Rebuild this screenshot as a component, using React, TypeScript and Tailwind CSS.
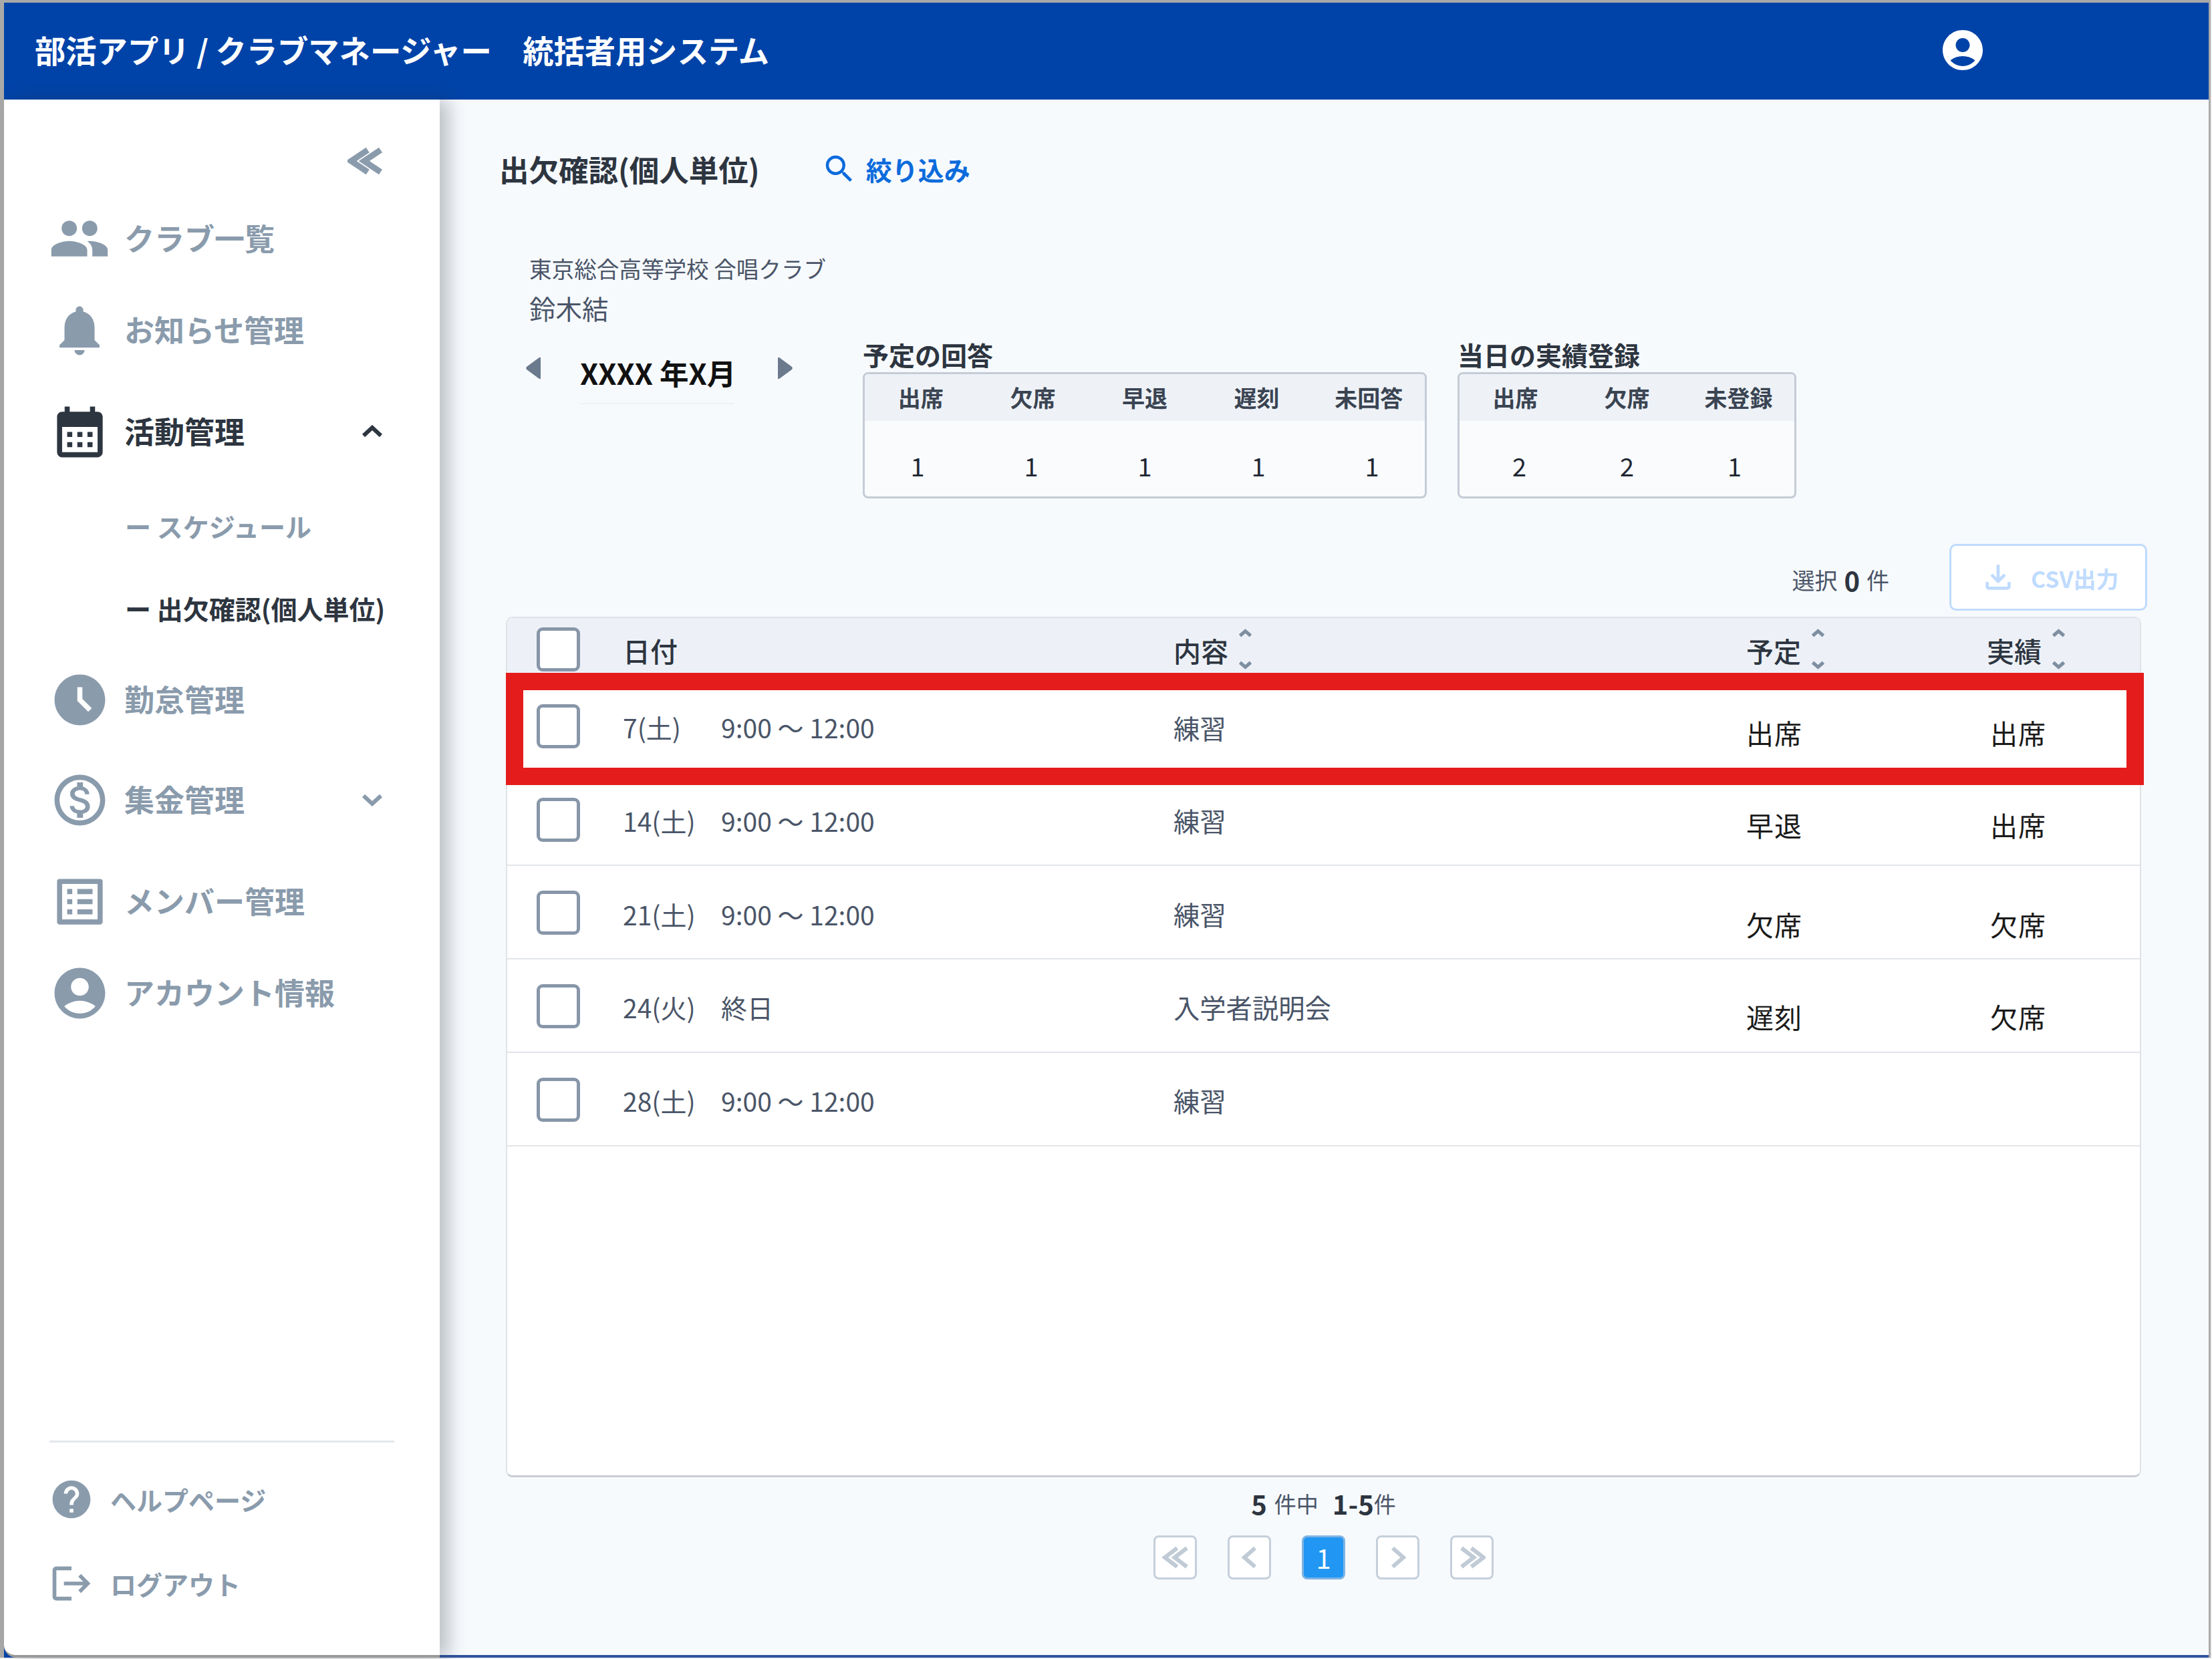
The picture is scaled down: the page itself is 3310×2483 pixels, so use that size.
import React from "react";
import {
  MdPeople,
  MdNotifications,
  MdCalendarMonth,
  MdAccessTimeFilled,
  MdOutlineMonetizationOn,
  MdOutlineListAlt,
  MdAccountCircle,
  MdHelp,
  MdLogout,
  MdSearch,
  MdOutlineFileDownload,
} from "react-icons/md";

function Chevron({ dir, w, h, stroke, color }: { dir: "up" | "down" | "left" | "right"; w: number; h: number; stroke: number; color: string }) {
  const pad = stroke / 2 + 1;
  const pts =
    dir === "up"
      ? `${pad},${h - pad} ${w / 2},${pad} ${w - pad},${h - pad}`
      : dir === "down"
      ? `${pad},${pad} ${w / 2},${h - pad} ${w - pad},${pad}`
      : dir === "left"
      ? `${w - pad},${pad} ${pad},${h / 2} ${w - pad},${h - pad}`
      : `${pad},${pad} ${w - pad},${h / 2} ${pad},${h - pad}`;
  return (
    <svg width={w} height={h} viewBox={`0 0 ${w} ${h}`} fill="none" className="block shrink-0">
      <polyline points={pts} stroke={color} strokeWidth={stroke} />
    </svg>
  );
}

function DoubleChevron({ dir, w, h, stroke, color }: { dir: "left" | "right"; w: number; h: number; stroke: number; color: string }) {
  const pad = stroke / 2 + 1;
  const arm = w * 0.56;
  const a =
    dir === "left"
      ? `${arm},${pad} ${pad},${h / 2} ${arm},${h - pad}`
      : `${pad},${pad} ${arm},${h / 2} ${pad},${h - pad}`;
  const off = w - arm - pad + 1;
  const b =
    dir === "left"
      ? `${arm + off},${pad} ${pad + off},${h / 2} ${arm + off},${h - pad}`
      : `${pad + off},${pad} ${arm + off},${h / 2} ${pad + off},${h - pad}`;
  return (
    <svg width={w} height={h} viewBox={`0 0 ${w} ${h}`} fill="none" className="block shrink-0">
      <polyline points={a} stroke={color} strokeWidth={stroke} />
      <polyline points={b} stroke={color} strokeWidth={stroke} />
    </svg>
  );
}

function Tri({ dir }: { dir: "left" | "right" }) {
  return (
    <svg width="22" height="32" viewBox="0 0 22 32" className="block shrink-0">
      <path
        d={dir === "left" ? "M20 0 L22 0 L22 32 L20 32 L1 18 C0 17 0 15 1 14 Z" : "M2 0 L0 0 L0 32 L2 32 L21 18 C22 17 22 15 21 14 Z"}
        fill="#6b7a8d"
      />
    </svg>
  );
}

const GRAY = "#8a9bac";

function NavItem({ icon, label, h, active, chevron }: { icon: React.ReactNode; label: string; h: string; active?: boolean; chevron?: "up" | "down" }) {
  return (
    <div className={`flex items-center pl-[75px] pr-[84px] ${h}`}>
      <div className="w-[76px] h-[76px] flex items-center justify-center shrink-0">{icon}</div>
      <div className={`ml-[29px] pb-[3px] text-[45px] font-bold leading-none ${active ? "text-[#2d3540]" : "text-[#8a9bac]"}`}>{label}</div>
      {chevron && (
        <div className="ml-auto">
          <Chevron dir={chevron} w={34} h={20} stroke={6} color={active ? "#2d3540" : GRAY} />
        </div>
      )}
    </div>
  );
}

function SubItem({ label, h, active }: { label: string; h: string; active?: boolean }) {
  return (
    <div className={`flex items-center pl-[181px] pb-[3px] ${h}`}>
      <div className={`text-[39px] font-bold leading-none whitespace-nowrap ${active ? "text-[#2d3540]" : "text-[#8a9bac]"}`}>{label}</div>
    </div>
  );
}

function StatBox({ title, width, cols, values, valuePad }: { title: string; width: string; cols: string; values: string[]; valuePad: string }) {
  const labels = title === "予定の回答" ? ["出席", "欠席", "早退", "遅刻", "未回答"] : ["出席", "欠席", "未登録"];
  return (
    <div className={`${width} shrink-0`}>
      <div className="h-[44px] pb-[4px] flex items-center text-[39px] font-bold leading-none text-[#2d3540]">{title}</div>
      <div className="mt-[3px] h-[189px] border-[3px] border-[#c5ccd6] rounded-[8px] overflow-hidden bg-[#f9fbfd]">
        <div className={`h-[70px] bg-[#eef2f7] grid ${cols} items-center text-center text-[34px] font-bold leading-none text-[#3a4452]`}>
          {labels.map((l) => (
            <div key={l}>{l}</div>
          ))}
        </div>
        <div className={`pt-[21px] h-[113px] grid ${cols} ${valuePad} items-center text-center text-[38px] leading-none text-[#1f2733]`}>
          {values.map((v, i) => (
            <div key={i}>{v}</div>
          ))}
        </div>
      </div>
    </div>
  );
}

function Checkbox({ top }: { top: string }) {
  return <div className={`ml-[44px] ${top} w-[65px] h-[66px] rounded-[9px] border-[5px] border-[#8796a8] bg-white shrink-0`} />;
}

function SortArrows() {
  return (
    <div className="ml-[14px] mt-[3px] flex flex-col gap-[33px]">
      <Chevron dir="up" w={23} h={14} stroke={5} color="#7f8fa2" />
      <Chevron dir="down" w={23} h={14} stroke={5} color="#7f8fa2" />
    </div>
  );
}

const ROWS = [
  { date: "7(土)", time: "9:00 〜 12:00", content: "練習", plan: "出席", actual: "出席", pad: "pt-[24px]", h: "h-[141px]", textPad: "pt-[8px]", boxTop: "mt-[5px]" },
  { date: "14(土)", time: "9:00 〜 12:00", content: "練習", plan: "早退", actual: "出席", pad: "pt-[18px]", h: "h-[140px]", textPad: "pt-[6px]", boxTop: "mt-[3px]" },
  { date: "21(土)", time: "9:00 〜 12:00", content: "練習", plan: "欠席", actual: "欠席", pad: "pt-[36px]", h: "h-[140px]", textPad: "pt-[6px]", boxTop: "mt-[1px]" },
  { date: "24(火)", time: "終日", content: "入学者説明会", plan: "遅刻", actual: "欠席", pad: "pt-[32px]", h: "h-[140px]", textPad: "pt-[4px]", boxTop: "mt-[1px]" },
  { date: "28(土)", time: "9:00 〜 12:00", content: "練習", plan: "", actual: "", pad: "", h: "h-[140px]", textPad: "pt-[4px]", boxTop: "mt-[1px]" },
];

const COLS = "grid grid-cols-[173px_824px_857px_360px_1fr]";

function PageBtn({ children, active }: { children: React.ReactNode; active?: boolean }) {
  return (
    <div
      className={`w-[65px] h-[66px] rounded-[8px] border-[3px] flex items-center justify-center ${
        active ? "bg-[#2196f3] border-[#7fb4e4] text-white text-[40px] leading-none" : "bg-white border-[#c5cfdb]"
      }`}
    >
      {children}
    </div>
  );
}

export default function App() {
  return (
    <div className="w-[3310px] h-[2483px] bg-[#f2f2f2] overflow-hidden font-['Noto_Sans_CJK_JP','Noto_Sans',sans-serif]">
      <div className="w-[3308px] h-[2481px] border-l-[6px] border-t-[4px] border-r-[3px] border-[#a9a9a9] bg-[#0043a8] flex flex-col">
        <header className="h-[145px] shrink-0 bg-[#0043a8] flex items-center pl-[46px] pr-[332px] pb-[4px]">
          <div className="text-[46.3px] font-bold leading-none text-white whitespace-nowrap">部活アプリ / クラブマネージャー　統括者用システム</div>
          <MdAccountCircle size={72} color="#ffffff" className="ml-auto shrink-0" />
        </header>
        <div className="flex-1 flex min-h-0">
          <aside className="relative z-10 w-[652px] shrink-0 bg-white border-b-[4px] border-[#999999] rounded-bl-[18px] flex flex-col shadow-[14px_0_26px_rgba(40,50,60,0.28)]">
            <div className="h-[140px] flex items-center justify-end pr-[84px] pt-[44px]">
              <DoubleChevron dir="left" w={54} h={44} stroke={9} color={GRAY} />
            </div>
            <NavItem h="h-[136px]" label="クラブ一覧" icon={<MdPeople size={92} color={GRAY} className="shrink-0" />} />
            <NavItem h="h-[138px]" label="お知らせ管理" icon={<MdNotifications size={90} color={GRAY} className="shrink-0" />} />
            <NavItem h="h-[166px]" label="活動管理" active chevron="up" icon={<MdCalendarMonth size={91} color="#2d3540" className="shrink-0" />} />
            <SubItem h="h-[120px]" label="ー スケジュール" />
            <SubItem h="h-[126px]" label="ー 出欠確認(個人単位)" active />
            <NavItem h="h-[144px]" label="勤怠管理" icon={<MdAccessTimeFilled size={91} color={GRAY} className="shrink-0" />} />
            <NavItem h="h-[156px]" label="集金管理" chevron="down" icon={<MdOutlineMonetizationOn size={91} color={GRAY} className="shrink-0" />} />
            <NavItem h="h-[148px]" label="メンバー管理" icon={<MdOutlineListAlt size={91} color={GRAY} className="shrink-0" />} />
            <NavItem h="h-[126px]" label="アカウント情報" icon={<MdAccountCircle size={91} color={GRAY} className="shrink-0" />} />
            <div className="mt-auto">
              <div className="mx-[68px] h-[3px] bg-[#e5e7eb]" />
              <div className="pt-[21px] pb-[45px]">
                <div className="h-[128px] flex items-center pl-[67px]">
                  <MdHelp size={68} color={GRAY} className="shrink-0" />
                  <div className="ml-[24px] text-[39px] font-bold leading-none text-[#8a9bac]">ヘルプページ</div>
                </div>
                <div className="h-[124px] flex items-center pl-[67px]">
                  <MdLogout size={68} color={GRAY} className="shrink-0" />
                  <div className="ml-[24px] text-[39px] font-bold leading-none text-[#8a9bac]">ログアウト</div>
                </div>
              </div>
            </div>
          </aside>

          <main className="flex-1 min-w-0 bg-[#f7fafd] border-b-[4px] border-[#2f55a0] flex flex-col">
            <div className="mt-[74px] ml-[89px] h-[60px] flex items-center">
              <div className="text-[44.5px] font-bold leading-none text-[#2d3540] whitespace-nowrap">出欠確認(個人単位)</div>
              <div className="ml-[92px] flex items-center text-[#0b6bdc]">
                <MdSearch size={54} color="#0b6bdc" className="shrink-0" />
                <div className="ml-[13px] text-[39px] font-bold leading-none">絞り込み</div>
              </div>
            </div>

            <div className="mt-[94px] ml-[134px] h-[50px] flex items-center text-[33.6px] leading-none text-[#4a5568]">東京総合高等学校 合唱クラブ</div>
            <div className="mt-[9px] ml-[134px] h-[50px] flex items-center text-[39.5px] leading-none text-[#4a5568]">鈴木結</div>

            <div className="mt-[24px] ml-[129px] flex items-start">
              <div className="w-[504px] shrink-0 pt-[25px] flex items-start">
                <Tri dir="left" />
                <div className="ml-[59px] w-[230px] h-[70px] border-b-2 border-[#eef1f4] text-[43.5px] font-bold leading-[46px] text-[#111111] whitespace-nowrap">XXXX 年X月</div>
                <div className="ml-[66px]">
                  <Tri dir="right" />
                </div>
              </div>
              <StatBox title="予定の回答" width="w-[844px]" cols="grid-cols-5" valuePad="-mx-[6px]" values={["1", "1", "1", "1", "1"]} />
              <div className="w-[46px] shrink-0" />
              <StatBox title="当日の実績登録" width="w-[507px]" cols="grid-cols-3" valuePad="px-[9px]" values={["2", "2", "1"]} />
            </div>

            <div className="mt-[68px] h-[100px] pr-[92px] flex items-center justify-end">
              <div className="pt-[8px] flex items-center leading-none text-[#4a5568] text-[34px] whitespace-nowrap">
                <span>選択</span>
                <span className="mx-[10px] text-[40px] font-bold text-[#2d3540]">0</span>
                <span>件</span>
              </div>
              <div className="ml-[90px] w-[296px] h-[100px] rounded-[10px] border-[3px] border-[#bfdbfe] bg-white flex items-center pl-[42px]">
                <MdOutlineFileDownload size={56} color="#bfdbfe" className="shrink-0" />
                <div className="ml-[21px] pt-[3px] text-[34px] font-bold leading-none text-[#bfdbfe]">CSV出力</div>
              </div>
            </div>

            <div className="mt-[9px] ml-[99px] w-[2447px] h-[1288px] bg-white border-2 border-b-[3px] border-[#dfe3e8] border-b-[#c9cdd2] rounded-[10px]">
              <div className={`${COLS} h-[90px] items-center bg-[#edf1f7] rounded-t-[8px] text-[41px] font-medium leading-none text-[#2d3540]`}>
                <Checkbox top="mt-[3px]" />
                <div className="pt-[6px]">日付</div>
                <div className="flex items-center">
                  <div className="pt-[6px]">内容</div>
                  <SortArrows />
                </div>
                <div className="flex items-center">
                  <div className="pt-[6px]">予定</div>
                  <SortArrows />
                </div>
                <div className="flex items-center">
                  <div className="pt-[6px]">実績</div>
                  <SortArrows />
                </div>
              </div>
              {ROWS.map((r, i) => (
                <div key={r.date} className={`${COLS} relative ${r.h} items-center border-b-2 border-[#e2e6ea] leading-none text-[#4a5568]`}>
                  <Checkbox top={r.boxTop} />
                  <div className={`${r.textPad} flex text-[39px]`}>
                    <span className="w-[147px] shrink-0">{r.date}</span>
                    <span>{r.time}</span>
                  </div>
                  <div className={`${r.textPad} text-[39.3px]`}>{r.content}</div>
                  <div className={`${r.pad} text-[41px] tracking-[1px] text-[#1a1a1a]`}>{r.plan}</div>
                  <div className={`${r.pad} ml-[5px] text-[41px] tracking-[1px] text-[#1a1a1a]`}>{r.actual}</div>
                  {i === 0 && <div className="absolute -left-[2px] -right-[6px] -top-[8px] -bottom-[21px] border-[26px] border-[#e51c1c] pointer-events-none z-10" />}
                </div>
              ))}
            </div>

            <div className="mt-[14px] h-[50px] pr-[2px] flex items-center justify-center leading-none text-[33px] text-[#4a5568]">
              <span className="text-[40px] font-bold text-[#2d3540]">5</span>
              <span className="ml-[11px]">件中</span>
              <span className="ml-[21px] text-[40px] font-bold text-[#2d3540]">1-5</span>
              <span>件</span>
            </div>
            <div className="mt-[23px] pr-[2px] flex justify-center gap-[46px]">
              <PageBtn>
                <DoubleChevron dir="left" w={40} h={36} stroke={6} color="#c0cbd6" />
              </PageBtn>
              <PageBtn>
                <Chevron dir="left" w={24} h={36} stroke={6} color="#c0cbd6" />
              </PageBtn>
              <PageBtn active>1</PageBtn>
              <PageBtn>
                <Chevron dir="right" w={24} h={36} stroke={6} color="#c0cbd6" />
              </PageBtn>
              <PageBtn>
                <DoubleChevron dir="right" w={40} h={36} stroke={6} color="#c0cbd6" />
              </PageBtn>
            </div>
          </main>
        </div>
      </div>
    </div>
  );
}
